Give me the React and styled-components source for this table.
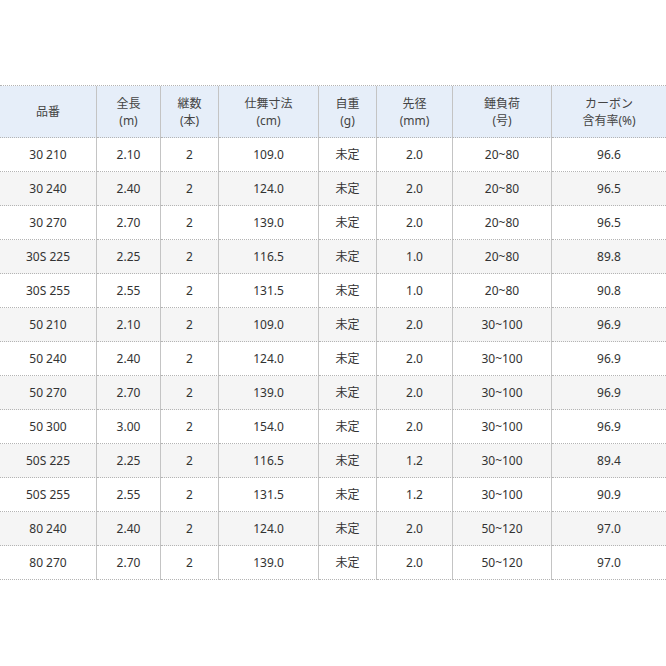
import React from 'react';
import styled, { createGlobalStyle } from 'styled-components';

const GlobalStyle = createGlobalStyle`
	html, body {
		margin: 0;
		padding: 0;
		background: #fff;
	}
	body {
		font-family: "Noto Sans", "Noto Sans CJK JP", sans-serif;
		color: #333;
	}
`;

const columns = [
	{ label: ['品番'], width: 97 },
	{ label: ['全長', '(m)'], width: 64 },
	{ label: ['継数', '(本)'], width: 58 },
	{ label: ['仕舞寸法', '(cm)'], width: 100 },
	{ label: ['自重', '(g)'], width: 58 },
	{ label: ['先径', '(mm)'], width: 76 },
	{ label: ['錘負荷', '(号)'], width: 99 },
	{ label: ['カーボン', '含有率(%)'], width: 114 },
];

const rows = [
	['30 210', '2.10', '2', '109.0', '未定', '2.0', '20~80', '96.6'],
	['30 240', '2.40', '2', '124.0', '未定', '2.0', '20~80', '96.5'],
	['30 270', '2.70', '2', '139.0', '未定', '2.0', '20~80', '96.5'],
	['30S 225', '2.25', '2', '116.5', '未定', '1.0', '20~80', '89.8'],
	['30S 255', '2.55', '2', '131.5', '未定', '1.0', '20~80', '90.8'],
	['50 210', '2.10', '2', '109.0', '未定', '2.0', '30~100', '96.9'],
	['50 240', '2.40', '2', '124.0', '未定', '2.0', '30~100', '96.9'],
	['50 270', '2.70', '2', '139.0', '未定', '2.0', '30~100', '96.9'],
	['50 300', '3.00', '2', '154.0', '未定', '2.0', '30~100', '96.9'],
	['50S 225', '2.25', '2', '116.5', '未定', '1.2', '30~100', '89.4'],
	['50S 255', '2.55', '2', '131.5', '未定', '1.2', '30~100', '90.9'],
	['80 240', '2.40', '2', '124.0', '未定', '2.0', '50~120', '97.0'],
	['80 270', '2.70', '2', '139.0', '未定', '2.0', '50~120', '97.0'],
];

const App = () => {
	return (
		<Page>
			<GlobalStyle />
			<SpecTable>
				<colgroup>
					{columns.map((col, i) => (
						<col key={i} style={{ width: col.width }} />
					))}
				</colgroup>
				<thead>
					<tr>
						{columns.map((col, i) => (
							<HeadCell key={i} last={i === columns.length - 1}>
								{col.label.map((line, j) => (
									<HeadLine key={j}>{line}</HeadLine>
								))}
							</HeadCell>
						))}
					</tr>
				</thead>
				<tbody>
					{rows.map((row, r) => (
						<Row key={r} striped={r % 2 === 1}>
							{row.map((val, c) => (
								<Cell key={c} last={c === row.length - 1}>
									{val}
								</Cell>
							))}
						</Row>
					))}
				</tbody>
			</SpecTable>
		</Page>
	);
};

export default App;

const Page = styled.div`
	padding-top: 85px;
	width: 666px;
	overflow: hidden;
`;

const SpecTable = styled.table`
	width: 666px;
	table-layout: fixed;
	border-collapse: separate;
	border-spacing: 0;
	border-top: 1px dotted #b4b4b4;
	font-size: 12px;
`;

const HeadCell = styled.th`
	box-sizing: border-box;
	height: 52px;
	padding: 0;
	font-weight: normal;
	color: #444;
	text-align: center;
	vertical-align: middle;
	background: #e6eef9;
	border-bottom: 1px dotted #b4b4b4;
	border-right: ${(p) => (p.last ? 'none' : '1px solid #c4c4c4')};
`;

const HeadLine = styled.div`
	line-height: 17px;
`;

const Row = styled.tr`
	background: ${(p) => (p.striped ? '#f5f5f5' : '#fff')};
`;

const Cell = styled.td`
	box-sizing: border-box;
	height: 34px;
	padding: 0;
	text-align: center;
	vertical-align: middle;
	line-height: 17px;
	border-bottom: 1px dotted #b4b4b4;
	border-right: ${(p) => (p.last ? 'none' : '1px solid #c4c4c4')};
`;
